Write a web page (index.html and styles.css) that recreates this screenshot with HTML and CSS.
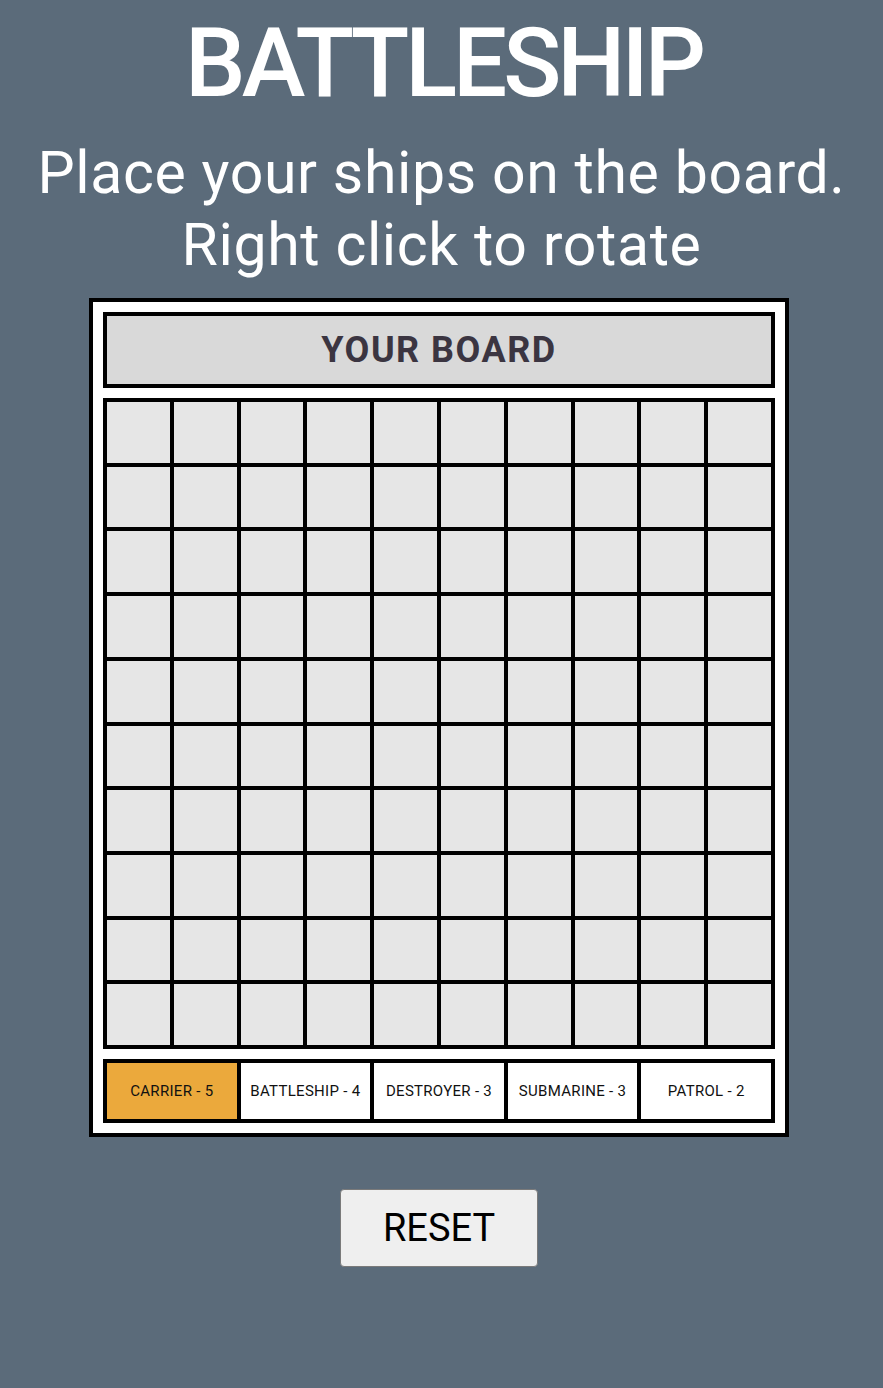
FILE: index.html
```html
<!DOCTYPE html>
<html lang="en">
<head>
<meta charset="utf-8">
<title>Battleship</title>
<link rel="stylesheet" href="styles.css">
</head>
<body>
<header class="intro">
  <h1 class="title">BATTLESHIP</h1>
  <p class="subtitle">Place your ships on the board.<br>Right click to rotate</p>
</header>
<main class="game">
  <section class="board">
    <div class="board-header">YOUR BOARD</div>
    <div class="grid">
      <div class="cell"></div><div class="cell"></div><div class="cell"></div><div class="cell"></div><div class="cell"></div><div class="cell"></div><div class="cell"></div><div class="cell"></div><div class="cell"></div><div class="cell"></div>
      <div class="cell"></div><div class="cell"></div><div class="cell"></div><div class="cell"></div><div class="cell"></div><div class="cell"></div><div class="cell"></div><div class="cell"></div><div class="cell"></div><div class="cell"></div>
      <div class="cell"></div><div class="cell"></div><div class="cell"></div><div class="cell"></div><div class="cell"></div><div class="cell"></div><div class="cell"></div><div class="cell"></div><div class="cell"></div><div class="cell"></div>
      <div class="cell"></div><div class="cell"></div><div class="cell"></div><div class="cell"></div><div class="cell"></div><div class="cell"></div><div class="cell"></div><div class="cell"></div><div class="cell"></div><div class="cell"></div>
      <div class="cell"></div><div class="cell"></div><div class="cell"></div><div class="cell"></div><div class="cell"></div><div class="cell"></div><div class="cell"></div><div class="cell"></div><div class="cell"></div><div class="cell"></div>
      <div class="cell"></div><div class="cell"></div><div class="cell"></div><div class="cell"></div><div class="cell"></div><div class="cell"></div><div class="cell"></div><div class="cell"></div><div class="cell"></div><div class="cell"></div>
      <div class="cell"></div><div class="cell"></div><div class="cell"></div><div class="cell"></div><div class="cell"></div><div class="cell"></div><div class="cell"></div><div class="cell"></div><div class="cell"></div><div class="cell"></div>
      <div class="cell"></div><div class="cell"></div><div class="cell"></div><div class="cell"></div><div class="cell"></div><div class="cell"></div><div class="cell"></div><div class="cell"></div><div class="cell"></div><div class="cell"></div>
      <div class="cell"></div><div class="cell"></div><div class="cell"></div><div class="cell"></div><div class="cell"></div><div class="cell"></div><div class="cell"></div><div class="cell"></div><div class="cell"></div><div class="cell"></div>
      <div class="cell"></div><div class="cell"></div><div class="cell"></div><div class="cell"></div><div class="cell"></div><div class="cell"></div><div class="cell"></div><div class="cell"></div><div class="cell"></div><div class="cell"></div>
    </div>
    <div class="ships">
      <div class="ship ship-selected">CARRIER - 5</div>
      <div class="ship">BATTLESHIP - 4</div>
      <div class="ship">DESTROYER - 3</div>
      <div class="ship">SUBMARINE - 3</div>
      <div class="ship">PATROL - 2</div>
    </div>
  </section>
  <button class="reset" type="button">RESET</button>
</main>
</body>
</html>
```
FILE: styles.css
```css
* {
  box-sizing: border-box;
}

html, body {
  margin: 0;
  padding: 0;
}

body {
  background: #5b6b7a;
  font-family: Roboto, "Noto Sans", sans-serif;
  color: #ffffff;
  min-height: 1388px;
}

.intro {
  text-align: center;
}

.title {
  margin: 13px 0 0;
  padding-left: 4px;
  font-size: 96px;
  line-height: 100px;
  font-weight: 500;
  letter-spacing: -4px;
}

.subtitle {
  margin: 24px 0 0;
  font-size: 59px;
  line-height: 72px;
  font-weight: 400;
  letter-spacing: 0.6px;
}

.game {
  width: 878px;
  display: flex;
  flex-direction: column;
  align-items: center;
  padding-top: 17px;
}

.board {
  width: 700px;
  border: 4px solid #000;
  background: #fff;
  padding: 10px;
  display: flex;
  flex-direction: column;
  gap: 10px;
}

.board-header {
  height: 76px;
  border: 4px solid #000;
  background: #d9d9d9;
  color: #3b3541;
  font-size: 36px;
  font-weight: 700;
  letter-spacing: 1.5px;
  display: flex;
  align-items: center;
  justify-content: center;
}

.grid {
  height: 651px;
  background: #000;
  padding: 4px;
  display: grid;
  grid-template-columns: repeat(10, 1fr);
  grid-template-rows: repeat(10, 1fr);
  gap: 4px;
}

.cell {
  background: #e6e6e6;
}

.ships {
  height: 64px;
  background: #000;
  padding: 4px;
  display: grid;
  grid-template-columns: repeat(5, 1fr);
  gap: 4px;
}

.ship {
  background: #fff;
  color: #111;
  font-size: 15px;
  letter-spacing: 0.3px;
  display: flex;
  align-items: center;
  justify-content: center;
}

.ship-selected {
  background: #eba93c;
}

.reset {
  margin-top: 52px;
  width: 198px;
  height: 78px;
  background: #efefef;
  border: 1px solid #7a7a7a;
  border-radius: 4px;
  font-family: Roboto, "Noto Sans", sans-serif;
  font-size: 38px;
  color: #000;
  padding: 0;
}
```
